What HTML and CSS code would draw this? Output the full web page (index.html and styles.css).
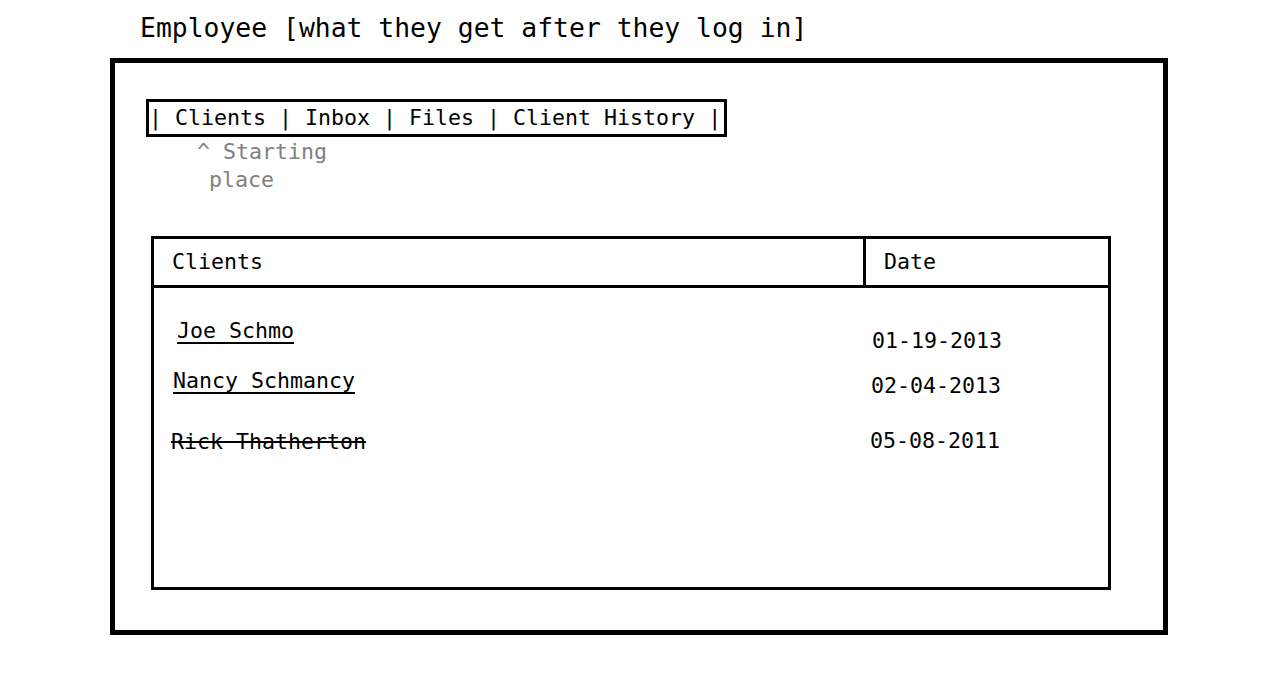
FILE: index.html
```html
<!DOCTYPE html>
<html>
<head>
<meta charset="utf-8">
<link rel="stylesheet" href="styles.css">
</head>
<body>
<h1 class="title">Employee [what they get after they log in]</h1>
<div class="frame">
  <nav class="nav">| <span class="nav-item">Clients</span> | <span class="nav-item">Inbox</span> | <span class="nav-item">Files</span> | <span class="nav-item">Client History</span> |</nav>
  <div class="note">
    <div class="note-line">^ Starting</div>
    <div class="note-line note-indent">place</div>
  </div>
  <div class="table">
    <div class="th th-clients">Clients</div>
    <div class="th th-date">Date</div>
    <div class="col col-names">
      <a class="name name-1">Joe Schmo</a>
      <a class="name name-2">Nancy Schmancy</a>
      <span class="name name-3 struck">Rick Thatherton</span>
    </div>
    <div class="col col-dates">
      <span class="date date-1">01-19-2013</span>
      <span class="date date-2">02-04-2013</span>
      <span class="date date-3">05-08-2011</span>
    </div>
  </div>
</div>
</body>
</html>
```
FILE: styles.css
```css
html, body {
  margin: 0;
  padding: 0;
  background: #fff;
  color: #000;
  font-family: "DejaVu Sans Mono", "Liberation Mono", monospace;
}
.title {
  margin: 0;
  padding: 12px 0 0 140px;
  font-size: 26.4px;
  font-weight: normal;
  line-height: 32px;
  height: 32px;
  white-space: nowrap;
}
.frame {
  box-sizing: border-box;
  margin: 14px 0 0 110px;
  width: 1058px;
  height: 577px;
  border: 5px solid #000;
  padding: 36px 0 0 31px;
}
.nav {
  box-sizing: border-box;
  display: inline-block;
  vertical-align: top;
  height: 38px;
  width: 581px;
  border: 3px solid #000;
  padding: 0;
  font-size: 21.6px;
  line-height: 32px;
  white-space: pre;
}
.note {
  margin: 1px 0 0 51px;
  color: #808080;
  font-size: 21.6px;
  line-height: 28px;
}
.note-line {
  white-space: pre;
}
.note-indent {
  padding-left: 12px;
}
.table {
  box-sizing: border-box;
  margin: 42px 0 0 5px;
  width: 960px;
  height: 354px;
  border: 3px solid #000;
  display: grid;
  grid-template-columns: 712px 1fr;
  grid-template-rows: 49px 1fr;
  font-size: 21.6px;
  line-height: 26px;
}
.th {
  display: flex;
  align-items: center;
  border-bottom: 3px solid #000;
}
.th-clients {
  border-right: 3px solid #000;
  padding-left: 18px;
}
.th-date {
  padding-left: 18px;
}
.col {
  display: flex;
  flex-direction: column;
  align-items: flex-start;
}
.name {
  color: #000;
  text-decoration: underline;
  text-decoration-thickness: 2px;
  text-underline-offset: 4px;
  white-space: pre;
}
.struck {
  text-decoration: line-through;
  text-decoration-thickness: 2px;
}
.name-1 { margin: 30px 0 0 23px; }
.name-2 { margin: 24px 0 0 19px; }
.name-3 { margin: 35px 0 0 17px; }
.date { white-space: pre; }
.date-1 { margin: 40px 0 0 6px; }
.date-2 { margin: 19px 0 0 5px; }
.date-3 { margin: 29px 0 0 4px; }
```
